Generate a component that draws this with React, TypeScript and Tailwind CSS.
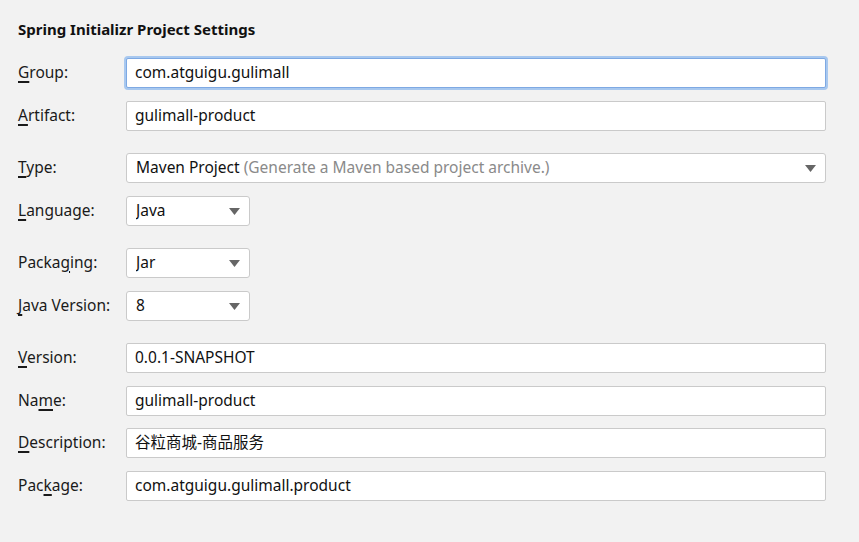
import React from "react";

const font = { fontFamily: '"Noto Sans", "Noto Sans CJK SC", sans-serif' };

function Label({ pre, u, post }: { pre?: string; u: string; post: string }) {
  return (
    <div className="w-[108px] shrink-0 text-[15.5px] text-[#1a1a1a] leading-none pb-[1px]">
      {pre}
      <span className="underline decoration-[1.5px] underline-offset-[3px]">{u}</span>
      {post}
    </div>
  );
}

function Arrow() {
  return (
    <svg width="11" height="7" viewBox="0 0 11 7" className="shrink-0">
      <polygon points="0,0 11,0 5.5,7" fill="#666666" />
    </svg>
  );
}

function TextField({ value, focused }: { value: string; focused?: boolean }) {
  return (
    <div
      className={
        "h-[30px] w-[700px] bg-white rounded-[2px] flex items-center pl-[8px] pb-[1px] text-[15.5px] text-[#111] " +
        (focused
          ? "border border-[#7ea9e3] shadow-[0_0_0_2px_#a8c8ef]"
          : "border border-[#cacaca]")
      }
    >
      {value}
    </div>
  );
}

function Combo({ children, wide }: { children: React.ReactNode; wide?: boolean }) {
  return (
    <div
      className={
        "h-[30px] bg-white rounded-[3px] border border-[#cacaca] flex items-center pl-[9px] pr-[9px] text-[15.5px] text-[#111] " +
        (wide ? "w-[700px]" : "w-[124px]")
      }
    >
      <div className="flex-1 whitespace-nowrap overflow-hidden pb-[1px]">{children}</div>
      <Arrow />
    </div>
  );
}

function Row({ children, mt }: { children: React.ReactNode; mt: string }) {
  return <div className={"flex items-center " + mt}>{children}</div>;
}

export default function App() {
  return (
    <div className="w-[859px] h-[542px] bg-[#f2f2f2] pl-[18px] pt-[19px] overflow-hidden" style={font}>
      <div className="text-[15px] font-bold text-[#111] leading-[20px]">Spring Initializr Project Settings</div>
      <Row mt="mt-[19px]">
        <Label u="G" post="roup:" />
        <TextField value="com.atguigu.gulimall" focused />
      </Row>
      <Row mt="mt-[13px]">
        <Label u="A" post="rtifact:" />
        <TextField value="gulimall-product" />
      </Row>
      <Row mt="mt-[22px]">
        <Label u="T" post="ype:" />
        <Combo wide>
          Maven Project <span className="text-[#8a8a8a]">(Generate a Maven based project archive.)</span>
        </Combo>
      </Row>
      <Row mt="mt-[13px]">
        <Label u="L" post="anguage:" />
        <Combo>Java</Combo>
      </Row>
      <Row mt="mt-[22px]">
        <Label pre="Packa" u="g" post="ing:" />
        <Combo>Jar</Combo>
      </Row>
      <Row mt="mt-[13px]">
        <Label u="J" post="ava Version:" />
        <Combo>8</Combo>
      </Row>
      <Row mt="mt-[22px]">
        <Label u="V" post="ersion:" />
        <TextField value="0.0.1-SNAPSHOT" />
      </Row>
      <Row mt="mt-[13px]">
        <Label pre="Na" u="m" post="e:" />
        <TextField value="gulimall-product" />
      </Row>
      <Row mt="mt-[12px]">
        <Label u="D" post="escription:" />
        <TextField value="谷粒商城-商品服务" />
      </Row>
      <Row mt="mt-[13px]">
        <Label pre="Pac" u="k" post="age:" />
        <TextField value="com.atguigu.gulimall.product" />
      </Row>
    </div>
  );
}
